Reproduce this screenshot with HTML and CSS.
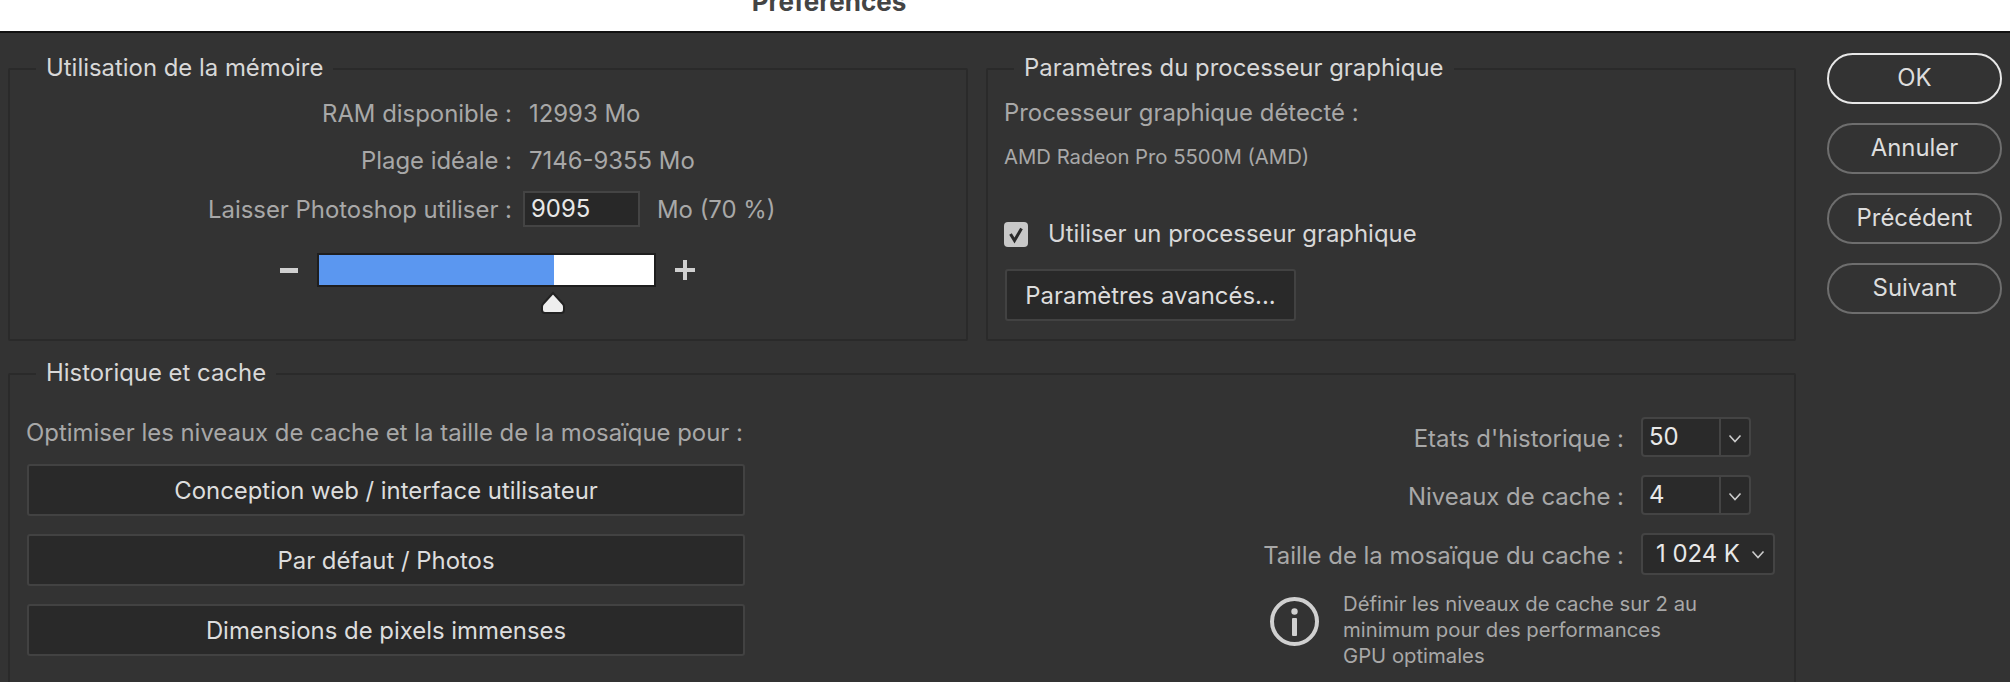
FILE: index.html
```html
<!DOCTYPE html>
<html lang="fr">
  <head>
    <meta charset="UTF-8" />
    <title>Préférences</title>
    <link rel="stylesheet" href="styles.css">
  </head>
  <body>
    <div class="titlebar"><span class="title">Préférences</span></div>

    <div class="main">
      <div class="panels">
        <div class="panels-top">
          <fieldset class="panel memory">
            <legend>Utilisation de la mémoire</legend>
            <div class="mem-row">
              <span class="mem-label">RAM disponible :</span>
              <span class="mem-value">12993 Mo</span>
            </div>
            <div class="mem-row">
              <span class="mem-label">Plage idéale :</span>
              <span class="mem-value">7146-9355 Mo</span>
            </div>
            <div class="mem-row input-row">
              <span class="mem-label">Laisser Photoshop utiliser :</span>
              <div class="mem-input">9095</div>
              <span class="mem-value">Mo (70 %)</span>
            </div>
            <div class="slider-row">
              <svg class="slider-minus" width="18" height="5"><rect width="18" height="5" fill="#d0d0d0" /></svg>
              <div class="track">
                <div class="track-fill" style="width: 70%"></div>
                <svg class="thumb" width="26" height="24" viewBox="0 0 26 24">
                  <path d="M13 2 L23 13 Q24 14 24 16 L24 19 Q24 22 21 22 L5 22 Q2 22 2 19 L2 16 Q2 14 3 13 Z" fill="#eeeeee" stroke="#222" stroke-width="2" />
                </svg>
              </div>
              <svg class="slider-plus" width="20" height="20"><path d="M0 10 H20 M10 0 V20" stroke="#d0d0d0" stroke-width="4" /></svg>
            </div>
          </fieldset>

          <fieldset class="panel gpu">
            <legend>Paramètres du processeur graphique</legend>
            <div class="gpu-label">Processeur graphique détecté :</div>
            <div class="gpu-name">AMD Radeon Pro 5500M (AMD)</div>
            <div class="check-row">
              <svg class="check" width="24" height="25" viewBox="0 0 24 25">
                <rect width="24" height="25" rx="4" fill="#c8c8c8" />
                <path d="M6.5 12 L10.5 18.5 L17.5 6.5" fill="none" stroke="#2a2a2a" stroke-width="3" />
              </svg>
              <span class="check-label">Utiliser un processeur graphique</span>
            </div>
            <div class="btn btn-advanced">Paramètres avancés...</div>
          </fieldset>
        </div>

        <fieldset class="panel cache">
          <legend>Historique et cache</legend>
          <div class="cache-left">
            <div class="cache-intro">Optimiser les niveaux de cache et la taille de la mosaïque pour :</div>
            <div class="btn btn-wide">Conception web / interface utilisateur</div>
            <div class="btn btn-wide">Par défaut / Photos</div>
            <div class="btn btn-wide">Dimensions de pixels immenses</div>
          </div>
          <div class="cache-right">
            <div class="cache-grid">
              <span class="cache-label">Etats d'historique :</span>
              <div class="combo">
                <span class="combo-value">50</span>
                <span class="combo-arrow"><svg width="14" height="9" viewBox="0 0 14 9"><path d="M1.5 1.5 L7 7.5 L12.5 1.5" fill="none" stroke="#ccc" stroke-width="1.6" /></svg></span>
              </div>
              <span class="cache-label">Niveaux de cache :</span>
              <div class="combo">
                <span class="combo-value">4</span>
                <span class="combo-arrow"><svg width="14" height="9" viewBox="0 0 14 9"><path d="M1.5 1.5 L7 7.5 L12.5 1.5" fill="none" stroke="#ccc" stroke-width="1.6" /></svg></span>
              </div>
              <span class="cache-label">Taille de la mosaïque du cache :</span>
              <div class="select">
                <span>1 024 K</span>
                <svg width="14" height="9" viewBox="0 0 14 9"><path d="M1.5 1.5 L7 7.5 L12.5 1.5" fill="none" stroke="#ccc" stroke-width="1.6" /></svg>
              </div>
            </div>
            <div class="info">
              <svg class="info-icon" width="49" height="49" viewBox="0 0 49 49">
                <circle cx="24.5" cy="24.5" r="22.5" fill="none" stroke="#d0d0d0" stroke-width="4" />
                <circle cx="24.5" cy="14.5" r="3.2" fill="#d0d0d0" />
                <rect x="22" y="21" width="5" height="18" rx="1" fill="#d0d0d0" />
              </svg>
              <div class="info-text">Définir les niveaux de cache sur 2 au<br>minimum pour des performances<br>GPU optimales</div>
            </div>
          </div>
        </fieldset>
      </div>

      <div class="actions">
        <div class="pill pill-default">OK</div>
        <div class="pill">Annuler</div>
        <div class="pill">Précédent</div>
        <div class="pill">Suivant</div>
      </div>
    </div>
  </body>
</html>
```

FILE: styles.css
```css
* {
  box-sizing: border-box;
}
html,
body {
  height: 100%;
}
body {
  margin: 0;
  height: 682px;
  overflow: hidden;
  background: #333333;
  font-family: "Inter", "Liberation Sans", sans-serif;
  font-size: 23.9px;
  line-height: 30px;
  color: #a8a8a8;
}
.titlebar {
  height: 33px;
  background: #ffffff;
  border-bottom: 2px solid #111111;
  overflow: hidden;
  text-align: center;
}
.title {
  display: block;
  margin-top: -13px;
  padding-right: 352px;
  font-size: 26px;
  line-height: 30px;
  font-weight: 700;
  color: #444444;
}
.main {
  display: flex;
  gap: 31px;
  padding: 20px 8px 0;
}
.panels {
  width: 1788px;
  margin-top: 2px;
  display: flex;
  flex-direction: column;
  gap: 19px;
}
.panels-top {
  display: grid;
  grid-template-columns: 960px 810px;
  gap: 18px;
  height: 286px;
}
.panel {
  margin: 0;
  padding: 0;
  min-width: 0;
  border: 2px solid #2a2a2a;
  border-radius: 2px;
}
.panel legend {
  margin-left: 26px;
  padding: 0 10px 2px;
  line-height: 26px;
  color: #d8d8d8;
}

/* memory */
.mem-row {
  display: flex;
  align-items: center;
  min-height: 34px;
  margin-top: 13px;
}
.mem-row.input-row {
  margin-top: 14px;
}
.mem-label {
  width: 502px;
  padding-top: 1px;
  text-align: right;
  white-space: nowrap;
}
.mem-value {
  margin-left: 17px;
  padding-top: 1px;
}
.mem-input {
  margin-left: 11px;
  margin-right: 0;
  width: 117px;
  height: 36px;
  padding-left: 6px;
  line-height: 32px;
  color: #e8e8e8;
  background: #282828;
  border: 2px solid #444444;
}
.slider-row {
  display: flex;
  align-items: center;
  margin-top: 26px;
  margin-left: 270px;
}
.track {
  position: relative;
  width: 339px;
  height: 34px;
  margin: 0 19px;
  background: #ffffff;
  border: 2px solid #1e1e1e;
}
.track-fill {
  height: 100%;
  background: #5b97f0;
}
.thumb {
  position: absolute;
  left: 221px;
  top: 36px;
}

/* gpu */
.gpu {
  padding-left: 16px;
}
.gpu legend {
  margin-left: 10px;
}
.gpu-label {
  margin-top: 13px;
  line-height: 34px;
}
.gpu-name {
  margin-top: 14px;
  font-size: 20.3px;
  line-height: 26px;
}
.check-row {
  display: flex;
  align-items: center;
  gap: 20px;
  margin-top: 49px;
  color: #d8d8d8;
}
.btn {
  display: flex;
  align-items: center;
  justify-content: center;
  height: 52px;
  padding-top: 2px;
  color: #dddddd;
  background: #292929;
  border: 2px solid #424242;
  border-radius: 3px;
}
.btn-advanced {
  width: 291px;
  margin-top: 20px;
  margin-left: 1px;
}

/* history and cache */
.cache {
  display: flex;
  height: 340px;
  padding: 29px 0 0 16px;
}
.cache legend {
  margin-left: 10px;
}
.cache-left {
  width: 719px;
}
.cache-intro {
  line-height: 32px;
  margin-bottom: 15px;
  white-space: nowrap;
}
.btn-wide {
  margin: 0 0 18px 1px;
  width: 718px;
}
.cache-right {
  margin-left: 525px;
  width: 505px;
}
.cache-grid {
  display: grid;
  grid-template-columns: 354px 134px;
  column-gap: 17px;
  row-gap: 18px;
  align-items: center;
  justify-items: start;
}
.cache-label {
  justify-self: end;
  padding-top: 3px;
  white-space: nowrap;
}
.combo {
  display: flex;
  width: 110px;
  height: 40px;
  background: #2a2a2a;
  border: 2px solid #444444;
  border-radius: 4px;
  color: #e8e8e8;
}
.combo-value {
  width: 78px;
  padding-left: 6px;
  line-height: 36px;
  border-right: 2px solid #444444;
}
.combo-arrow {
  flex: 1;
  display: flex;
  align-items: center;
  justify-content: center;
  padding-top: 3px;
}
.select {
  display: flex;
  align-items: center;
  gap: 11px;
  width: 134px;
  height: 42px;
  padding-left: 13px;
  background: #2a2a2a;
  border: 2px solid #444444;
  border-radius: 4px;
  color: #e8e8e8;
  white-space: nowrap;
}
.info {
  display: flex;
  gap: 24px;
  margin-top: 16px;
}
.info-icon {
  margin-top: 6px;
  flex: none;
}
.info-text {
  font-size: 20.3px;
  line-height: 26px;
}

/* right side buttons */
.actions {
  width: 175px;
  display: flex;
  flex-direction: column;
  gap: 19px;
}
.pill {
  height: 51px;
  padding-bottom: 2px;
  display: flex;
  align-items: center;
  justify-content: center;
  color: #dddddd;
  border: 2px solid #6e6e6e;
  border-radius: 26px;
}
.pill-default {
  border-color: #e8e8e8;
}
```
